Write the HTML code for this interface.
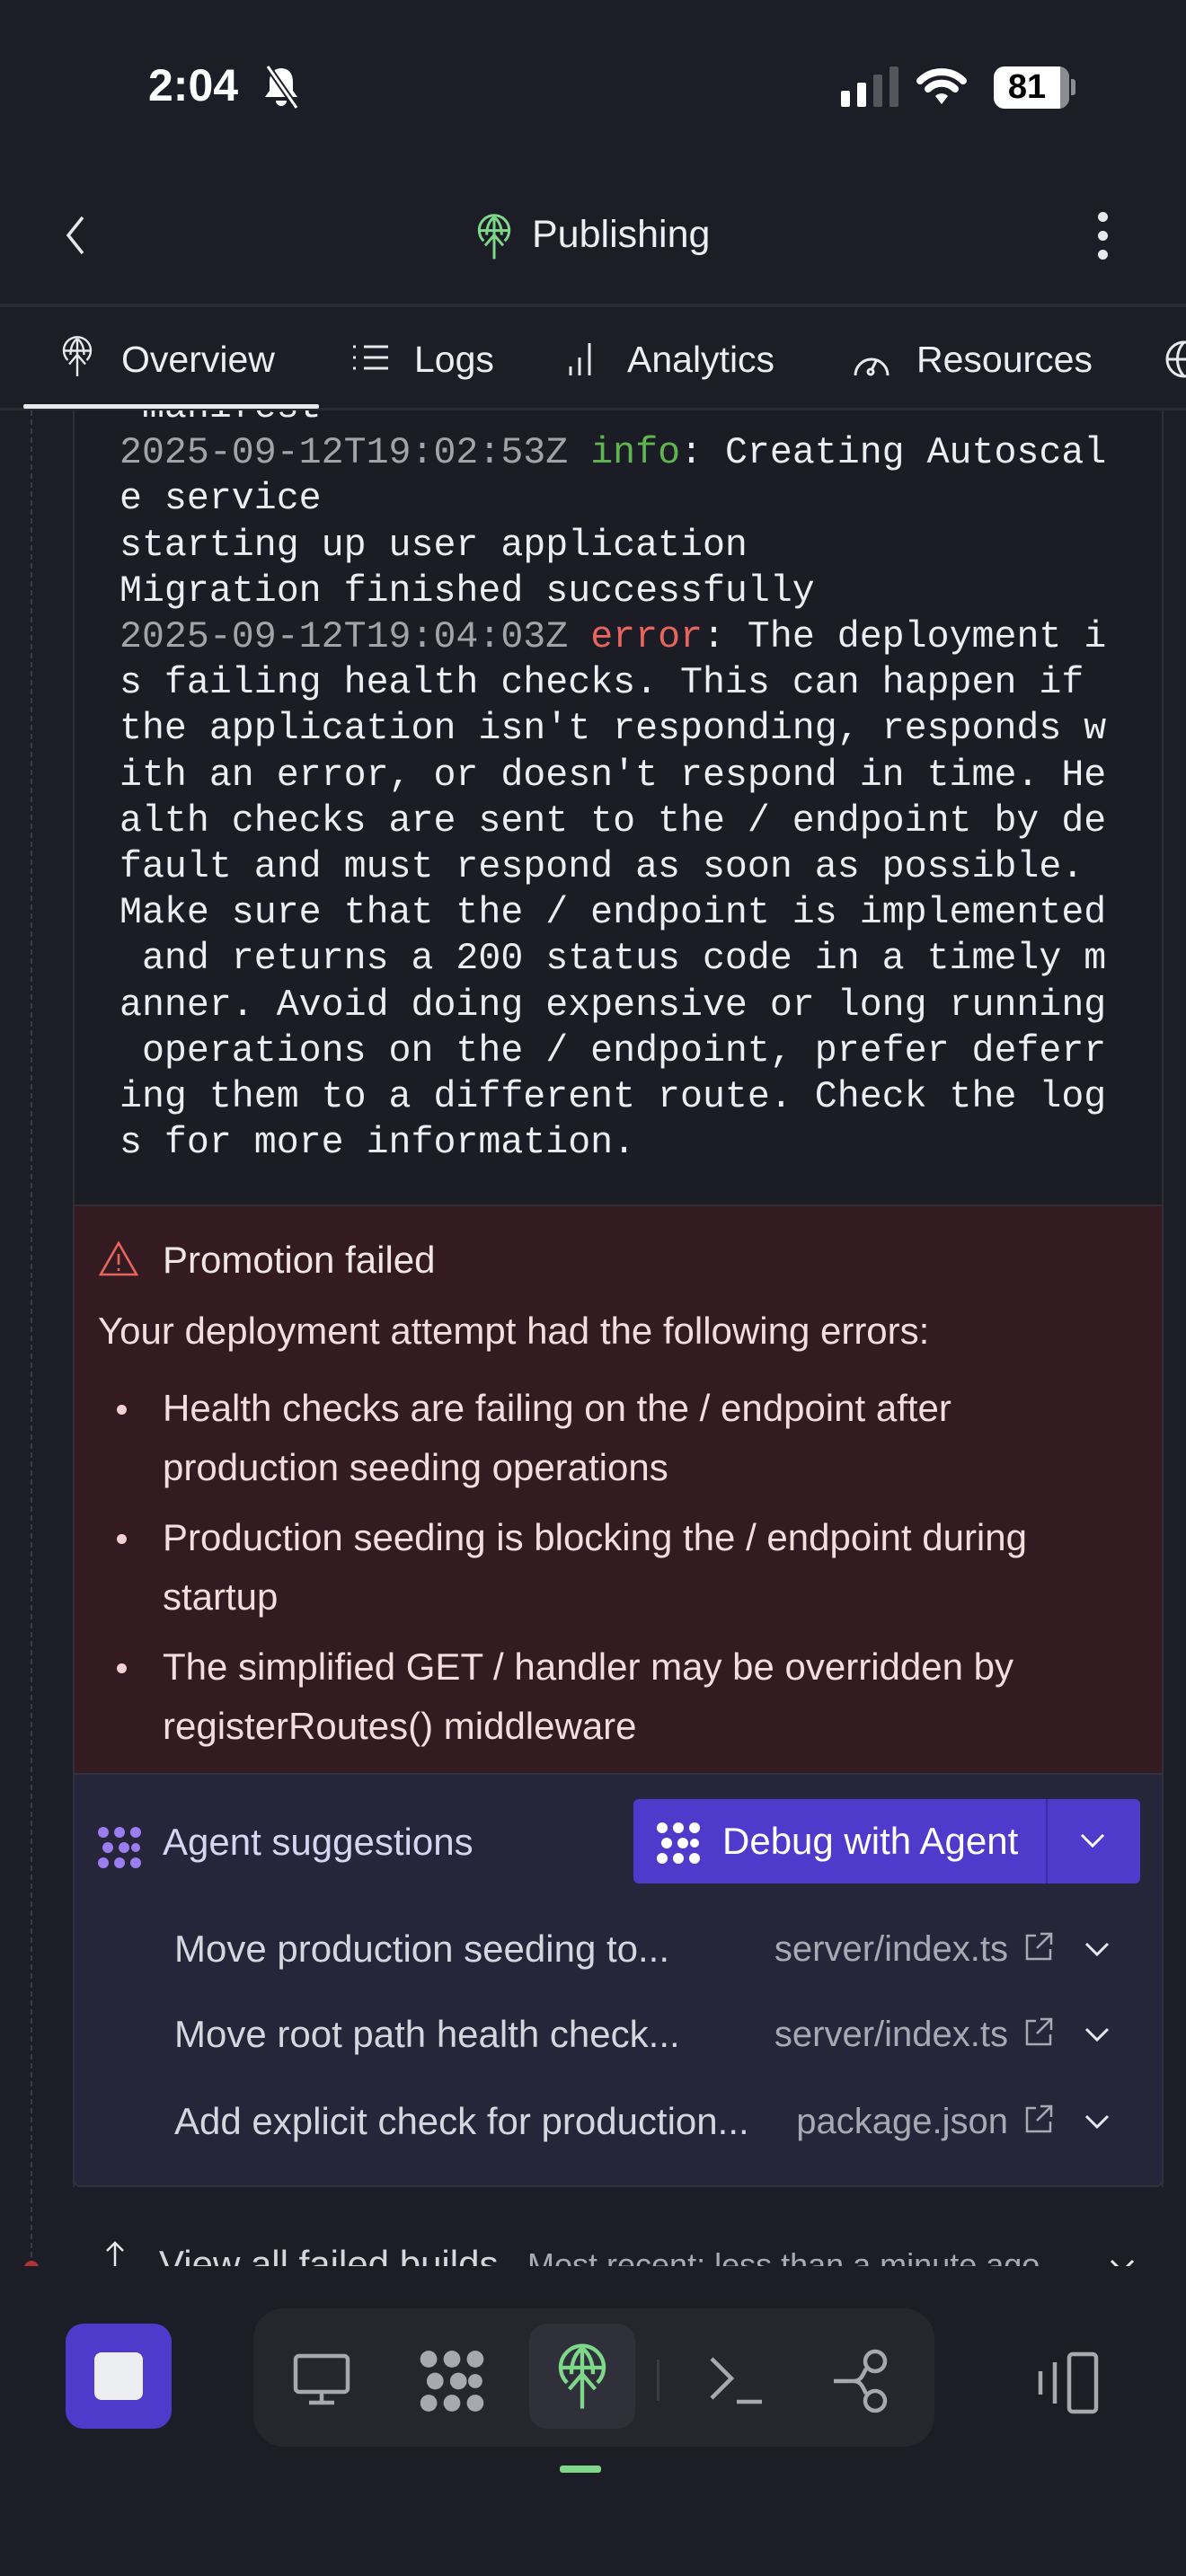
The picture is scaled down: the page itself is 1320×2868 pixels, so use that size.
<!DOCTYPE html>
<html><head><meta charset="utf-8"><style>
*{margin:0;padding:0;box-sizing:border-box}
body{width:1320px;height:2868px;background:#1c1d26;color:#eceef2;font-family:"Liberation Sans",sans-serif;position:relative;overflow:hidden}
.a{position:absolute}
.mono{font-family:"Liberation Mono",monospace;font-size:41.6px;line-height:51.2px;white-space:pre;color:#eceef2}
.ts{color:#a3a4aa}
.t{font-size:42px;white-space:nowrap}
.f{font-size:40px;white-space:nowrap}
svg{overflow:visible}
</style></head><body>
<!-- status bar -->
<div class="a" style="left:165px;top:66px;font-size:50px;font-weight:bold;color:#fff">2:04</div>
<svg class="a" style="left:290px;top:72px" width="46" height="50" viewBox="0 0 46 50"><path d="M23 4c-9 0-13 7-13 15v10l-5 7h36l-5-7V19c0-8-4-15-13-15z" fill="#fff"/><path d="M17 40a6 6 0 0 0 12 0z" fill="#fff"/><path d="M8 2l32 46" stroke="#1c1d26" stroke-width="7"/><path d="M8 2l32 46" stroke="#fff" stroke-width="3"/></svg>
<div class="a" style="left:936px;top:101px;width:10px;height:18px;background:#fff;border-radius:2px"></div>
<div class="a" style="left:954px;top:92px;width:10px;height:27px;background:#fff;border-radius:2px"></div>
<div class="a" style="left:972px;top:83px;width:10px;height:36px;background:#55565c;border-radius:2px"></div>
<div class="a" style="left:990px;top:74px;width:10px;height:45px;background:#55565c;border-radius:2px"></div>
<svg class="a" style="left:1022px;top:74px" width="52" height="46" viewBox="0 0 52 46"><path d="M2 16a34 34 0 0 1 48 0" stroke="#fff" stroke-width="8" fill="none" stroke-linecap="round"/><path d="M11 25a21 21 0 0 1 30 0" stroke="#fff" stroke-width="8" fill="none" stroke-linecap="round"/><path d="M19 33a10 10 0 0 1 14 0L26 42z" fill="#fff"/></svg>
<div class="a" style="left:1106px;top:74px;width:84px;height:47px;background:#fff;border-radius:12px;overflow:hidden"><div class="a" style="right:0;top:0;width:10px;height:47px;background:#8c8d91"></div><div class="a" style="left:0;top:2px;width:74px;text-align:center;font-size:38px;font-weight:bold;color:#000">81</div></div>
<div class="a" style="left:1192px;top:88px;width:5px;height:18px;background:#8c8d91;border-radius:0 3px 3px 0"></div>
<!-- header -->
<svg class="a" style="left:72px;top:240px" width="24" height="44" viewBox="0 0 24 44"><path d="M20 2L4 22l16 20" stroke="#e8e9ee" stroke-width="3.5" fill="none"/></svg>
<svg class="a" style="left:530px;top:240px" width="40" height="50" viewBox="0 0 24 30"><g stroke="#7fd88a" stroke-width="1.8" fill="none"><path d="M5 17A10 10 0 1 1 19 17"/><path d="M2 10h20M12 1v28M12 1c-4 3-5 8-5 12M12 1c4 3 5 8 5 12M6 20l6-7 6 7"/></g></svg>
<div class="a" style="left:592px;top:237px;font-size:43px;color:#eceef2">Publishing</div>
<div class="a" style="left:1222px;top:236px;width:11px;height:11px;border-radius:50%;background:#e8e9ee"></div>
<div class="a" style="left:1222px;top:257px;width:11px;height:11px;border-radius:50%;background:#e8e9ee"></div>
<div class="a" style="left:1222px;top:278px;width:11px;height:11px;border-radius:50%;background:#e8e9ee"></div>
<div class="a" style="left:0;top:338px;width:1320px;height:4px;background:#2a2b34"></div>
<!-- tabs -->
<svg class="a" style="left:68px;top:374px" width="36" height="48" viewBox="0 0 24 30"><g stroke="#e8e9ee" stroke-width="1.6" fill="none"><path d="M5 17A10 10 0 1 1 19 17"/><path d="M2 10h20M12 1v28M12 1c-4 3-5 8-5 12M12 1c4 3 5 8 5 12M6 20l6-7 6 7"/></g></svg>
<div class="a" style="left:135px;top:377px;font-size:41px">Overview</div>
<svg class="a" style="left:393px;top:383px" width="40" height="30" viewBox="0 0 40 30"><g stroke="#e8e9ee" stroke-width="3"><path d="M0 3h3M0 15h3M0 27h3"/><path d="M12 3h27M12 15h27M12 27h27"/></g></svg>
<div class="a" style="left:461px;top:377px;font-size:41px">Logs</div>
<svg class="a" style="left:632px;top:382px" width="30" height="36" viewBox="0 0 30 36"><g stroke="#e8e9ee" stroke-width="3"><path d="M3 26v10M13 16v20M24 0v36"/></g></svg>
<div class="a" style="left:698px;top:377px;font-size:41px">Analytics</div>
<svg class="a" style="left:948px;top:384px" width="44" height="36" viewBox="0 0 44 36"><g stroke="#e8e9ee" stroke-width="3" fill="none"><path d="M4 34A18 18 0 1 1 40 34"/><path d="M22 28l6-12"/><circle cx="21" cy="30" r="3"/></g></svg>
<div class="a" style="left:1020px;top:377px;font-size:41px">Resources</div>
<svg class="a" style="left:1296px;top:378px" width="40" height="44" viewBox="0 0 40 44"><g stroke="#e8e9ee" stroke-width="3" fill="none"><circle cx="22" cy="22" r="19"/><path d="M3 22h38M22 3c-10 10-10 28 0 38"/></g></svg>
<div class="a" style="left:0;top:454px;width:1320px;height:3px;background:#2a2b34"></div>
<div class="a" style="left:26px;top:450px;width:329px;height:5px;background:#e8e9ee;border-radius:2px"></div>
<!-- content -->
<div class="a" style="left:0;top:457px;width:1320px;height:2066px;overflow:hidden">
 <div class="a" style="left:34px;top:0;width:0;height:2066px;border-left:2px dashed #3a3b45"></div>
 <div class="a" style="left:81px;top:0;width:1214px;height:1978px;border-left:2px solid #2c2d37;border-right:2px solid #2c2d37;background:#1b1c25"></div>
 <div class="a mono" style="left:133px;top:-29px">-manifest
<span class="ts">2025-09-12T19:02:53Z</span> <span style="color:#5fb64f">info</span>: Creating Autoscal
e service
starting up user application
Migration finished successfully
<span class="ts">2025-09-12T19:04:03Z</span> <span style="color:#e8655d">error</span>: The deployment i
s failing health checks. This can happen if
the application isn't responding, responds w
ith an error, or doesn't respond in time. He
alth checks are sent to the / endpoint by de
fault and must respond as soon as possible.
Make sure that the / endpoint is implemented
 and returns a 200 status code in a timely m
anner. Avoid doing expensive or long running
 operations on the / endpoint, prefer deferr
ing them to a different route. Check the log
s for more information.</div>
 <!-- error box -->
 <div class="a" style="left:81px;top:884px;width:1214px;height:634px;background:#341b21;border:2px solid #2f2f3a;border-bottom:none"></div>
 <svg class="a" style="left:110px;top:924px" width="44" height="40" viewBox="0 0 44 40"><g stroke="#e8655d" stroke-width="2.6" fill="none"><path d="M22 3L2 38h40z"/><path d="M22 15v12M22 31v3"/></g></svg>
 <div class="a t" style="left:181px;top:922px;color:#f0e6e8">Promotion failed</div>
 <div class="a t" style="left:109px;top:1001px;color:#f5dcdf">Your deployment attempt had the following errors:</div>
 <div class="a" style="left:181px;top:1078px;font-size:42px;line-height:66px;color:#f5dcdf;width:1100px;white-space:nowrap">
  <div style="position:relative">Health checks are failing on the / endpoint after<br>production seeding operations<span class="a" style="left:-51px;top:29px;width:11px;height:11px;border-radius:50%;background:#f5d0d4"></span></div>
  <div style="position:relative;margin-top:12px">Production seeding is blocking the / endpoint during<br>startup<span class="a" style="left:-51px;top:29px;width:11px;height:11px;border-radius:50%;background:#f5d0d4"></span></div>
  <div style="position:relative;margin-top:12px">The simplified GET / handler may be overridden by<br>registerRoutes() middleware<span class="a" style="left:-51px;top:29px;width:11px;height:11px;border-radius:50%;background:#f5d0d4"></span></div>
 </div>
 <!-- agent box -->
 <div class="a" style="left:81px;top:1517px;width:1214px;height:461px;background:#262539;border:2px solid #31313f;border-radius:0 0 8px 8px"></div>
 <svg class="a" style="left:108px;top:1575px" width="50" height="50" viewBox="0 0 50 50"><g fill="#9c7df0"><circle cx="7" cy="8" r="6"/><circle cx="25" cy="8" r="6"/><circle cx="43" cy="8" r="6"/><circle cx="12" cy="25" r="6"/><circle cx="30" cy="25" r="6"/><circle cx="43" cy="25" r="5"/><circle cx="7" cy="42" r="6"/><circle cx="25" cy="42" r="6"/><circle cx="43" cy="42" r="6"/></g></svg>
 <div class="a t" style="left:181px;top:1570px;color:#d8d4f2">Agent suggestions</div>
 <div class="a" style="left:705px;top:1546px;width:564px;height:94px;background:#4f3acb;border-radius:6px"></div>
 <div class="a" style="left:1164px;top:1546px;width:2px;height:94px;background:#3b2aa0"></div>
 <svg class="a" style="left:730px;top:1570px" width="50" height="50" viewBox="0 0 50 50"><g fill="#fff"><circle cx="7" cy="8" r="6"/><circle cx="25" cy="8" r="6"/><circle cx="43" cy="8" r="6"/><circle cx="12" cy="25" r="6"/><circle cx="30" cy="25" r="6"/><circle cx="43" cy="25" r="5"/><circle cx="7" cy="42" r="6"/><circle cx="25" cy="42" r="6"/><circle cx="43" cy="42" r="6"/></g></svg>
 <div class="a" style="left:804px;top:1569px;color:#fff;font-size:42px;white-space:nowrap">Debug with Agent</div>
 <svg class="a" style="left:1202px;top:1584px" width="28" height="16" viewBox="0 0 28 16"><path d="M2 2l12 12L26 2" stroke="#fff" stroke-width="3" fill="none"/></svg>
 <div class="a t" style="left:194px;top:1689px;color:#d6d6de">Move production seeding to...</div>
 <div class="a t" style="left:194px;top:1784px;color:#d6d6de">Move root path health check...</div>
 <div class="a t" style="left:194px;top:1881px;color:#d6d6de">Add explicit check for production...</div>
 <div class="a f" style="right:198px;top:1691px;color:#a8a9b2">server/index.ts</div>
 <div class="a f" style="right:198px;top:1786px;color:#a8a9b2">server/index.ts</div>
 <div class="a f" style="right:198px;top:1883px;color:#a8a9b2">package.json</div>
 <svg class="a" style="left:1140px;top:1694px" width="32" height="32" viewBox="0 0 32 32"><g stroke="#a8a9b2" stroke-width="2.5" fill="none"><path d="M13 4H3v26h26V19M18 2h12v12M30 2L14 18"/></g></svg>
 <svg class="a" style="left:1140px;top:1789px" width="32" height="32" viewBox="0 0 32 32"><g stroke="#a8a9b2" stroke-width="2.5" fill="none"><path d="M13 4H3v26h26V19M18 2h12v12M30 2L14 18"/></g></svg>
 <svg class="a" style="left:1140px;top:1886px" width="32" height="32" viewBox="0 0 32 32"><g stroke="#a8a9b2" stroke-width="2.5" fill="none"><path d="M13 4H3v26h26V19M18 2h12v12M30 2L14 18"/></g></svg>
 <svg class="a" style="left:1207px;top:1705px" width="28" height="16" viewBox="0 0 28 16"><path d="M2 2l12 12L26 2" stroke="#e8e9ee" stroke-width="3" fill="none"/></svg>
 <svg class="a" style="left:1207px;top:1800px" width="28" height="16" viewBox="0 0 28 16"><path d="M2 2l12 12L26 2" stroke="#e8e9ee" stroke-width="3" fill="none"/></svg>
 <svg class="a" style="left:1207px;top:1897px" width="28" height="16" viewBox="0 0 28 16"><path d="M2 2l12 12L26 2" stroke="#e8e9ee" stroke-width="3" fill="none"/></svg>
 <!-- view all -->
 <svg class="a" style="left:116px;top:2038px" width="24" height="30" viewBox="0 0 24 30"><path d="M12 2v28M3 11l9-9 9 9" stroke="#e8e9ee" stroke-width="2.5" fill="none"/></svg>
 <div class="a t" style="left:177px;top:2040px;color:#d6d6de">View all failed builds</div>
 <div class="a" style="left:587px;top:2044px;font-size:36px;color:#a8a9b2;white-space:nowrap">Most recent: less than a minute ago</div>
 <svg class="a" style="left:1235px;top:2058px" width="28" height="16" viewBox="0 0 28 16"><path d="M2 2l12 12L26 2" stroke="#e8e9ee" stroke-width="3" fill="none"/></svg>
 <div class="a" style="left:27px;top:2060px;width:16px;height:16px;border-radius:50%;background:#b03434"></div>
</div>
<!-- bottom nav -->
<div class="a" style="left:73px;top:2587px;width:118px;height:117px;background:#4f3acb;border-radius:20px"></div>
<div class="a" style="left:105px;top:2619px;width:54px;height:53px;background:#eceef2;border-radius:8px"></div>
<div class="a" style="left:282px;top:2570px;width:758px;height:154px;background:#25262e;border-radius:34px"></div>
<div class="a" style="left:589px;top:2587px;width:118px;height:117px;background:#2f3039;border-radius:20px"></div>
<svg class="a" style="left:326px;top:2620px" width="64" height="58" viewBox="0 0 64 58"><g stroke="#a8a9b0" stroke-width="4.5" fill="none"><rect x="3" y="3" width="58" height="40" rx="4"/><path d="M32 43v12M18 55h28"/></g></svg>
<svg class="a" style="left:467px;top:2615px" width="72" height="72" viewBox="0 0 50 50"><g fill="#a8a9b0"><circle cx="7" cy="8" r="6.5"/><circle cx="25" cy="8" r="6.5"/><circle cx="43" cy="8" r="6.5"/><circle cx="12" cy="25" r="6.5"/><circle cx="30" cy="25" r="6.5"/><circle cx="43" cy="25" r="5.5"/><circle cx="7" cy="42" r="6.5"/><circle cx="25" cy="42" r="6.5"/><circle cx="43" cy="42" r="6.5"/></g></svg>
<svg class="a" style="left:619px;top:2612px" width="58" height="72" viewBox="0 0 24 30"><g stroke="#7fd88a" stroke-width="1.8" fill="none"><path d="M5 17A10 10 0 1 1 19 17"/><path d="M2 10h20M12 1v28M12 1c-4 3-5 8-5 12M12 1c4 3 5 8 5 12M6 20l6-7 6 7"/></g></svg>
<div class="a" style="left:731px;top:2627px;width:3px;height:46px;background:#3a3b44"></div>
<svg class="a" style="left:788px;top:2622px" width="60" height="56" viewBox="0 0 60 56"><g stroke="#a8a9b0" stroke-width="4.5" fill="none"><path d="M4 4l22 22L4 48M32 52h28"/></g></svg>
<svg class="a" style="left:928px;top:2615px" width="66" height="72" viewBox="0 0 66 72"><g stroke="#a8a9b0" stroke-width="4.5" fill="none"><circle cx="46" cy="14" r="11"/><circle cx="46" cy="58" r="11"/><path d="M0 36h22c8 0 10-6 14-14M22 36c8 0 10 6 14 14"/></g></svg>
<svg class="a" style="left:1150px;top:2618px" width="76" height="70" viewBox="0 0 76 70"><g stroke="#a8a9b0" stroke-width="4.5" fill="none"><rect x="40" y="3" width="30" height="64" rx="4"/><path d="M24 12v46M8 22v26"/></g></svg>
<div class="a" style="left:623px;top:2745px;width:46px;height:8px;background:#7fd88a;border-radius:3px"></div>
</body></html>
